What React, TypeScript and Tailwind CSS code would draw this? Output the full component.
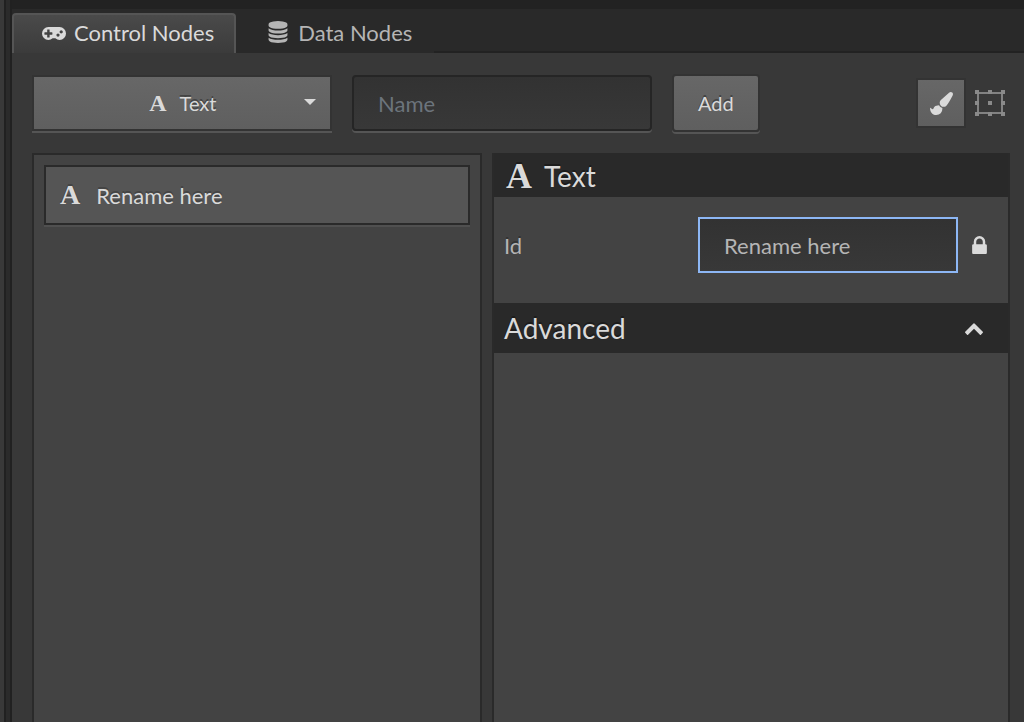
import { useState, ReactNode } from 'react';
import clsx from 'clsx';

interface GlyphProps {
  viewBox: string;
  d: string;
  className?: string;
}

function Glyph({ viewBox, d, className }: GlyphProps) {
  return (
    <svg viewBox={viewBox} className={clsx('shrink-0 fill-current', className)} aria-hidden="true">
      <path d={d} />
    </svg>
  );
}

const glyphs = {
  gamepad:
    'M832 1088v-128q0-14-9-23t-23-9h-192v-192q0-14-9-23t-23-9h-128q-14 0-23 9t-9 23v192h-192q-14 0-23 9t-9 23v128q0 14 9 23t23 9h192v192q0 14 9 23t23 9h128q14 0 23-9t9-23v-192h192q14 0 23-9t9-23zm576 64q0-53-37.5-90.5t-90.5-37.5-90.5 37.5-37.5 90.5 37.5 90.5 90.5 37.5 90.5-37.5 37.5-90.5zm256-256q0-53-37.5-90.5t-90.5-37.5-90.5 37.5-37.5 90.5 37.5 90.5 90.5 37.5 90.5-37.5 37.5-90.5zm256 128q0 212-150 362t-362 150q-192 0-338-128h-220q-146 128-338 128-212 0-362-150t-150-362 150-362 362-150h896q212 0 362 150t150 362z',
  database:
    'M768 768q237 0 443-43t325-127v170q0 69-103 128t-280 93.5-385 34.5-385-34.5-280-93.5-103-128v-170q119 84 325 127t443 43zm0 768q237 0 443-43t325-127v170q0 69-103 128t-280 93.5-385 34.5-385-34.5-280-93.5-103-128v-170q119 84 325 127t443 43zm0-384q237 0 443-43t325-127v170q0 69-103 128t-280 93.5-385 34.5-385-34.5-280-93.5-103-128v-170q119 84 325 127t443 43zm0-1152q208 0 385 34.5t280 93.5 103 128v128q0 69-103 128t-280 93.5-385 34.5-385-34.5-280-93.5-103-128v-128q0-69 103-128t280-93.5 385-34.5z',
  brush:
    'M1615 0q70 0 122.5 46.5t52.5 116.5q0 63-45 151-332 629-465 752-97 91-218 91-126 0-216.5-92.5t-90.5-219.5q0-128 92-212l638-579q59-54 130-54zm-909 1034q39 76 106.5 130t150.5 76l1 71q4 213-129.5 347t-348.5 134q-123 0-218-46.5t-152.5-127.5-86.5-183-29-220q7 5 41 30t62 44.5 59 36.5 46 17q41 0 55-37 25-66 57.5-112.5t69.5-76 88-47.5 103-25.5 125-10.5z',
  lock: 'M320 768h512v-192q0-106-75-181t-181-75-181 75-75 181v192zm832 96v576q0 40-28 68t-68 28h-960q-40 0-68-28t-28-68v-576q0-40 28-68t68-28h32v-192q0-184 132-316t316-132 316 132 132 316v192h32q40 0 68 28t28 68z',
  chevronUp:
    'M1683 1331l-166 165q-19 19-45 19t-45-19l-531-531-531 531q-19 19-45 19t-45-19l-166-165q-19-19-19-45.5t19-45.5l742-741q19-19 45-19t45 19l742 741q19 19 19 45.5t-19 45.5z',
};

const serif = "font-['Liberation_Serif',serif] font-bold leading-none";
const raised = 'bg-linear-to-b from-[#676767] to-[#5f5f5f] border-2 border-[#333333]';
const inset = 'bg-linear-to-b from-[#323232] to-[#383838]';

function BoundsIcon() {
  return (
    <svg viewBox="0 0 30 26" className="h-[26px] w-[30px] fill-[#8a8a8a]" aria-hidden="true">
      <path d="M3 3h24v20H3z" fill="none" stroke="#828282" strokeWidth="2" />
      <path d="M0 0h4v4H0zM13 0h4v4h-4zM26 0h4v4h-4zM0 11h4v4H0zM13 11h4v4h-4zM26 11h4v4h-4zM0 22h4v4H0zM13 22h4v4h-4zM26 22h4v4h-4z" />
    </svg>
  );
}

interface TabProps {
  active: boolean;
  onClick: () => void;
  children: ReactNode;
}

function Tab({ active, onClick, children }: TabProps) {
  return (
    <button
      type="button"
      role="tab"
      aria-selected={active}
      onClick={onClick}
      className={clsx(
        'flex h-10 items-center rounded-t border-2 border-b-0 pb-1 text-[22px] whitespace-nowrap',
        active
          ? 'border-[#555555] bg-linear-to-b from-[#4a4a4a] to-[#3b3b3b] pr-5 pl-7 text-[#dadada]'
          : 'border-transparent pr-5 pl-[30px] text-[#b5b5b5]'
      )}
    >
      {children}
    </button>
  );
}

export default function App() {
  const [tab, setTab] = useState('control');
  const [name, setName] = useState('');
  const [id, setId] = useState('Rename here');
  const [open, setOpen] = useState(true);

  return (
    <div className="flex min-h-screen bg-[#383838] font-['Lato',sans-serif] text-[#dadada]">
      {/* Splitter on the left edge */}
      <div className="w-1 bg-[#393939]" />
      <div className="w-2 border-x-2 border-[#212121] bg-[#2b2b2b]" />

      <div className="flex min-w-0 flex-1 flex-col">
        <div className="h-[9px] bg-[#222222]" />
        <div role="tablist" className="flex h-11 items-end bg-[#292929]">
          <Tab active={tab === 'control'} onClick={() => setTab('control')}>
            <Glyph viewBox="0 512 1920 1024" d={glyphs.gamepad} className="mt-0.5 mr-2 h-[13px] w-6" />
            Control Nodes
          </Tab>
          <Tab active={tab === 'data'} onClick={() => setTab('data')}>
            <Glyph viewBox="0 0 1536 1792" d={glyphs.database} className="mr-2.5 h-[22px] w-5" />
            Data Nodes
          </Tab>
          <div className="h-0.5 flex-1 bg-[#222222]" />
        </div>

        <div className="flex flex-1 flex-col pr-3.5 pl-5">
          {/* Toolbar */}
          <div className="flex h-[100px] items-center text-xl">
            <div className="relative max-w-[300px] min-w-0 flex-1">
              <select
                aria-label="Node type"
                className={clsx(
                  'block h-14 w-full appearance-none pl-8 [text-align-last:center] shadow-[0_2px_0_#555555] text-shadow-[0_-2px_0_#444444] outline-none',
                  raised
                )}
              >
                <option>Text</option>
              </select>
              <div className="pointer-events-none absolute inset-0 flex items-center justify-center">
                <span className={clsx('mr-12 text-2xl', serif)} aria-hidden="true">A</span>
              </div>
              <svg viewBox="0 0 12 6" className="pointer-events-none absolute top-6 right-4 h-1.5 w-3 fill-current" aria-hidden="true">
                <path d="M0 0h12L6 6z" />
              </svg>
            </div>
            <input
              aria-label="Name"
              placeholder="Name"
              value={name}
              onChange={(e) => setName(e.target.value)}
              className={clsx(
                'ml-5 h-14 max-w-[300px] min-w-0 flex-1 rounded border-2 border-[#252525] px-6 text-[22px] shadow-[0_2px_0_#555555] outline-none placeholder:text-[#6c747c]',
                inset
              )}
            />
            <button
              type="button"
              className={clsx('ml-5 h-[58px] rounded px-6 shadow-[0_2px_0_#555555] text-shadow-[0_-2px_0_#444444]', raised)}
            >
              Add
            </button>
            <button type="button" aria-label="Style" className={clsx('ml-auto flex size-[50px] items-center justify-center', raised)}>
              <Glyph viewBox="0 0 1792 1792" d={glyphs.brush} className="size-[23px]" />
            </button>
            <button type="button" aria-label="Bounds" className="ml-[9px] pr-[5px]">
              <BoundsIcon />
            </button>
          </div>

          <div className="grid flex-1 grid-cols-[450fr_518fr] gap-2.5">
            {/* Node list */}
            <ul className="border-2 border-b-0 border-[#2a2a2a] bg-[#434343] p-2.5">
              <li className="flex h-[60px] items-center border-2 border-[#2a2a2a] bg-[#555555] px-3.5 text-[22px] shadow-[0_2px_0_#505050] text-shadow-[0_-2px_0_#444444]">
                <span className={clsx('mr-4 text-[28px]', serif)} aria-hidden="true">A</span>
                Rename here
              </li>
            </ul>

            {/* Inspector */}
            <section className="border-x-2 border-[#2a2a2a] bg-[#434343]">
              <h2 className="flex h-11 items-center bg-[#292929] px-3 pt-0.5 text-[28px] text-shadow-[0_-2px_0_#1c1c1c]">
                <span className={clsx('mr-3 text-4xl', serif)} aria-hidden="true">A</span>
                Text
              </h2>
              <div className="flex h-[106px] items-start pt-5 pr-2 pl-2.5 text-[22px]">
                <label htmlFor="node-id" className="flex-1 leading-[58px] text-[#b5b5b5] text-shadow-[0_-2px_0_#333333]">
                  Id
                </label>
                <input
                  id="node-id"
                  value={id}
                  onChange={(e) => setId(e.target.value)}
                  className={clsx('h-14 w-[260px] min-w-0 border-2 border-[#8db7f5] px-6 text-[#b5b5b5] outline-none', inset)}
                />
                <button type="button" aria-label="Lock id" className="ml-3.5 flex h-14 w-7 items-center">
                  <Glyph viewBox="0 128 1152 1408" d={glyphs.lock} className="h-[18px] w-[15px]" />
                </button>
              </div>
              <h2 className="bg-[#292929]">
                <button
                  type="button"
                  aria-expanded={open}
                  onClick={() => setOpen(!open)}
                  className="flex h-[50px] w-full items-center justify-between pr-6 pl-2.5 text-[28px] text-shadow-[0_-2px_0_#1c1c1c]"
                >
                  Advanced
                  <Glyph viewBox="0 0 1792 1792" d={glyphs.chevronUp} className={clsx('size-5', !open && 'rotate-180')} />
                </button>
              </h2>
            </section>
          </div>
        </div>
      </div>
    </div>
  );
}
